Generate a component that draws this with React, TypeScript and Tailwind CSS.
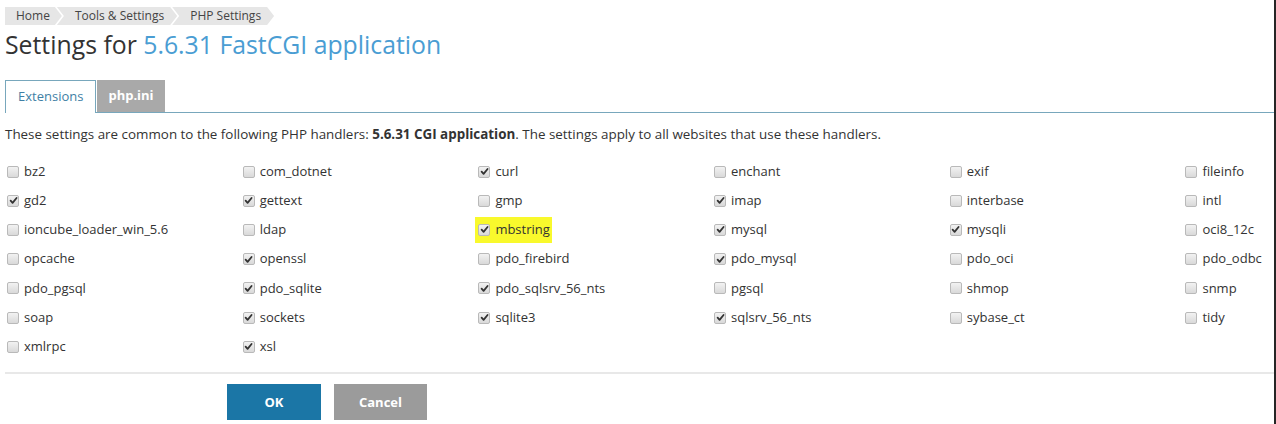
import React from 'react';

type Ext = { name: string; on: boolean; mark?: boolean };

const rows: Ext[][] = [
  [
    { name: 'bz2', on: false },
    { name: 'com_dotnet', on: false },
    { name: 'curl', on: true },
    { name: 'enchant', on: false },
    { name: 'exif', on: false },
    { name: 'fileinfo', on: false },
  ],
  [
    { name: 'gd2', on: true },
    { name: 'gettext', on: true },
    { name: 'gmp', on: false },
    { name: 'imap', on: true },
    { name: 'interbase', on: false },
    { name: 'intl', on: false },
  ],
  [
    { name: 'ioncube_loader_win_5.6', on: false },
    { name: 'ldap', on: false },
    { name: 'mbstring', on: true, mark: true },
    { name: 'mysql', on: true },
    { name: 'mysqli', on: true },
    { name: 'oci8_12c', on: false },
  ],
  [
    { name: 'opcache', on: false },
    { name: 'openssl', on: true },
    { name: 'pdo_firebird', on: false },
    { name: 'pdo_mysql', on: true },
    { name: 'pdo_oci', on: false },
    { name: 'pdo_odbc', on: false },
  ],
  [
    { name: 'pdo_pgsql', on: false },
    { name: 'pdo_sqlite', on: true },
    { name: 'pdo_sqlsrv_56_nts', on: true },
    { name: 'pgsql', on: false },
    { name: 'shmop', on: false },
    { name: 'snmp', on: false },
  ],
  [
    { name: 'soap', on: false },
    { name: 'sockets', on: true },
    { name: 'sqlite3', on: true },
    { name: 'sqlsrv_56_nts', on: true },
    { name: 'sybase_ct', on: false },
    { name: 'tidy', on: false },
  ],
  [
    { name: 'xmlrpc', on: false },
    { name: 'xsl', on: true },
  ],
];

function Check({ on }: { on: boolean }) {
  return (
    <span className="relative flex h-[12px] w-[12px] shrink-0 items-center justify-center rounded-[2px] border border-[#b9b9b9] bg-gradient-to-b from-[#f2f2f2] to-[#d9d9d9]">
      {on && (
        <svg viewBox="0 0 10 10" className="h-[9px] w-[9px]">
          <path d="M1.8 5.2 L4 7.6 L8.4 2.2" fill="none" stroke="#333" strokeWidth="2" strokeLinecap="round" strokeLinejoin="round" />
        </svg>
      )}
    </span>
  );
}

function Crumb({ label, first }: { label: string; first?: boolean }) {
  return (
    <span
      className={
        first
          ? 'flex h-[18px] items-center bg-[#e6e6e6] pl-[11px] pr-[12px] [clip-path:polygon(0_0,calc(100%_-_7px)_0,100%_50%,calc(100%_-_7px)_100%,0_100%)]'
          : '-ml-[5px] flex h-[18px] items-center bg-[#e6e6e6] pl-[18px] pr-[13px] [clip-path:polygon(0_0,calc(100%_-_7px)_0,100%_50%,calc(100%_-_7px)_100%,0_100%,7px_50%)]'
      }
    >
      {label}
    </span>
  );
}

export default function App() {
  return (
    <div className="flex h-[424px] w-[1276px] overflow-hidden bg-white font-['Open_Sans',sans-serif] text-[#333]">
      <div className="w-[1274px] shrink-0 overflow-hidden pl-[5px]">
        {/* breadcrumbs */}
        <div className="mt-[7px] flex text-[12px] text-[#444]">
          <Crumb label="Home" first />
          <Crumb label="Tools & Settings" />
          <Crumb label="PHP Settings" />
        </div>

        <h1 className="mt-[3px] whitespace-nowrap text-[24.8px] leading-[32px]">
          Settings for <span className="text-[#4a9dd3]">5.6.31 FastCGI application</span>
        </h1>

        {/* tabs */}
        <div className="mt-[20px] flex items-end border-b border-[#78a7bc]">
          <div className="-mb-px flex h-[33px] items-center border border-b-0 border-[#78a7bc] bg-white px-[12px] text-[13px] text-[#3f7fa5]">
            Extensions
          </div>
          <div className="ml-[1px] flex h-[32px] items-center bg-[#a9a9a9] px-[11px] text-[13px] font-bold text-white">
            php.ini
          </div>
        </div>

        <p className="mt-[12px] whitespace-nowrap text-[13.4px] leading-[18px]">
          These settings are common to the following PHP handlers: <b>5.6.31 CGI application</b>. The settings apply to all websites that use these handlers.
        </p>

        <div className="mt-[14px] w-[1420px]">
          {rows.map((row, i) => (
            <div key={i} className="grid h-[29.2px] grid-cols-[repeat(6,235.7px)] items-center">
              {row.map((ext) => (
                <label key={ext.name} className="flex items-center pl-[2px] text-[13px]">
                  <span className={ext.mark ? '-ml-[3px] flex items-center gap-[5px] bg-[#f9f92c] py-[3px] pl-[3px] pr-[2px]' : 'flex items-center gap-[5px]'}>
                    <Check on={ext.on} />
                    <span>{ext.name}</span>
                  </span>
                </label>
              ))}
            </div>
          ))}
        </div>

        <div className="mt-[11px] h-[2px] bg-[#e8e8e8]" />

        <div className="mt-[10px] flex gap-[13px] pl-[222px]">
          <button className="h-[36px] w-[94px] bg-[#1b76a6] text-[13px] font-bold text-white">OK</button>
          <button className="h-[36px] w-[93px] bg-[#9b9b9b] text-[13px] font-bold text-white">Cancel</button>
        </div>
      </div>
      <div className="w-[2px] shrink-0 bg-[#262626]" />
    </div>
  );
}
